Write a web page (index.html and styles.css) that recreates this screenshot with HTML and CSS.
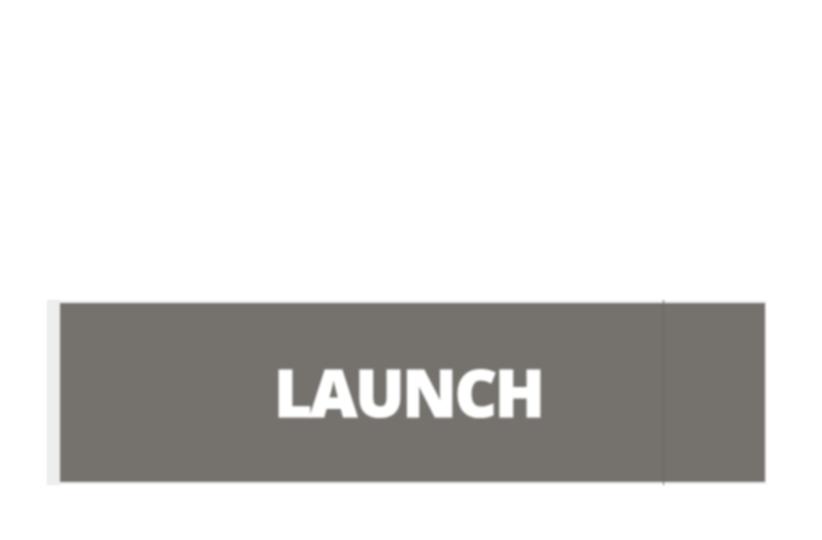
FILE: index.html
```html
<!DOCTYPE html>
<html>
<head>
<meta charset="utf-8">
<link rel="stylesheet" href="styles.css">
</head>
<body>
<div class="page">
  <div class="logo">
    <div class="edge"></div>
    <div class="plate">
      <span class="word">LAUNCH</span>
      <span class="tick"></span>
    </div>
  </div>
</div>
</body>
</html>
```
FILE: styles.css
```css
html, body {
  margin: 0;
  padding: 0;
  background: #ffffff;
}
.page {
  width: 822px;
  height: 540px;
  box-sizing: border-box;
  padding: 300px 0 0 47px;
}
.logo {
  display: flex;
  height: 185px;
  width: 720px;
  background: #f7f7f6;
}
.edge {
  width: 13px;
  background: #eeeeed;
  filter: blur(1px);
}
.plate {
  position: relative;
  margin: 3px 0 3px 0;
  width: 705px;
  background: #75726d;
  display: flex;
  align-items: center;
  justify-content: center;
  filter: blur(0.8px);
}
.word {
  font-family: "Open Sans", "DejaVu Sans", sans-serif;
  font-weight: 800;
  font-size: 65px;
  color: #ffffff;
  -webkit-text-stroke: 1.2px #ffffff;
  letter-spacing: -2px;
  line-height: 1;
  margin-left: -8px;
  margin-top: -1px;
}
.tick {
  position: absolute;
  left: 603px;
  top: -3px;
  bottom: -3px;
  width: 1px;
  background: #6a6764;
}
```
